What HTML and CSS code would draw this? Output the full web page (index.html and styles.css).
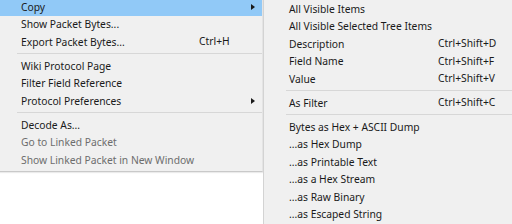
FILE: index.html
```html
<!DOCTYPE html>
<html lang="en">
<head>
    <meta charset="UTF-8">
    <title>Packet Context Menu</title>
    <link rel="stylesheet" href="styles.css">
</head>
<body>
    <div class="menus">
        <div class="menu main-menu">
            <div class="menu-item active">
                <span class="label">Copy</span>
                <span class="arrow"></span>
            </div>
            <div class="menu-item"><span class="label">Show Packet Bytes...</span></div>
            <div class="menu-item">
                <span class="label">Export Packet Bytes...</span>
                <span class="shortcut">Ctrl+H</span>
            </div>
            <div class="separator"></div>
            <div class="menu-item"><span class="label">Wiki Protocol Page</span></div>
            <div class="menu-item"><span class="label">Filter Field Reference</span></div>
            <div class="menu-item">
                <span class="label">Protocol Preferences</span>
                <span class="arrow"></span>
            </div>
            <div class="separator"></div>
            <div class="menu-item"><span class="label">Decode As...</span></div>
            <div class="menu-item disabled"><span class="label">Go to Linked Packet</span></div>
            <div class="menu-item disabled"><span class="label">Show Linked Packet in New Window</span></div>
        </div>

        <div class="menu sub-menu">
            <div class="menu-item"><span class="label">All Visible Items</span></div>
            <div class="menu-item"><span class="label">All Visible Selected Tree Items</span></div>
            <div class="menu-item">
                <span class="label">Description</span>
                <span class="shortcut">Ctrl+Shift+D</span>
            </div>
            <div class="menu-item">
                <span class="label">Field Name</span>
                <span class="shortcut">Ctrl+Shift+F</span>
            </div>
            <div class="menu-item">
                <span class="label">Value</span>
                <span class="shortcut">Ctrl+Shift+V</span>
            </div>
            <div class="separator"></div>
            <div class="menu-item">
                <span class="label">As Filter</span>
                <span class="shortcut">Ctrl+Shift+C</span>
            </div>
            <div class="separator"></div>
            <div class="menu-item"><span class="label">Bytes as Hex + ASCII Dump</span></div>
            <div class="menu-item"><span class="label">...as Hex Dump</span></div>
            <div class="menu-item"><span class="label">...as Printable Text</span></div>
            <div class="menu-item"><span class="label">...as a Hex Stream</span></div>
            <div class="menu-item"><span class="label">...as Raw Binary</span></div>
            <div class="menu-item"><span class="label">...as Escaped String</span></div>
        </div>
    </div>
</body>
</html>
```

FILE: styles.css
```css
body {
    margin: 0;
    background-color: #ffffff;
    font-family: "Noto Sans", "Open Sans", sans-serif;
    font-size: 10.3px;
    color: #1a1a1a;
    overflow: hidden;
}
.menus {
    display: flex;
    align-items: flex-start;
    height: 224px;
}
.menu {
    background-color: #f0f0f0;
}
.main-menu {
    width: 262px;
    margin-top: -2px;
    padding-bottom: 2px;
    border-right: 1px solid #e4e4e4;
    border-bottom: 1px solid #c9c9c9;
    box-shadow: 0 1px 1px rgba(0, 0, 0, 0.08);
}
.sub-menu {
    flex: 1;
    height: 224px;
    border-left: 1px solid #d3d3d3;
}
.menu-item {
    position: relative;
    display: flex;
    align-items: center;
    height: 17.5px;
    white-space: nowrap;
}
.main-menu .menu-item {
    padding-left: 21px;
}
.sub-menu .menu-item {
    padding-left: 25px;
}
.menu-item.active {
    background-color: #91c9f7;
}
.menu-item.disabled {
    color: #6d6d6d;
}
.shortcut {
    position: absolute;
    top: 0;
    line-height: 17.5px;
}
.main-menu .shortcut {
    left: 199px;
}
.sub-menu .shortcut {
    left: 174px;
}
.arrow {
    position: absolute;
    left: 251px;
    top: 6px;
    width: 0;
    height: 0;
    border-top: 3px solid transparent;
    border-bottom: 3px solid transparent;
    border-left: 4px solid #1a1a1a;
}
.separator {
    height: 1px;
    margin: 2px 0 3.5px;
    background-color: #d7d7d7;
}
.main-menu .separator {
    margin-left: 17px;
}
.sub-menu .separator {
    margin-left: 22px;
}
```
